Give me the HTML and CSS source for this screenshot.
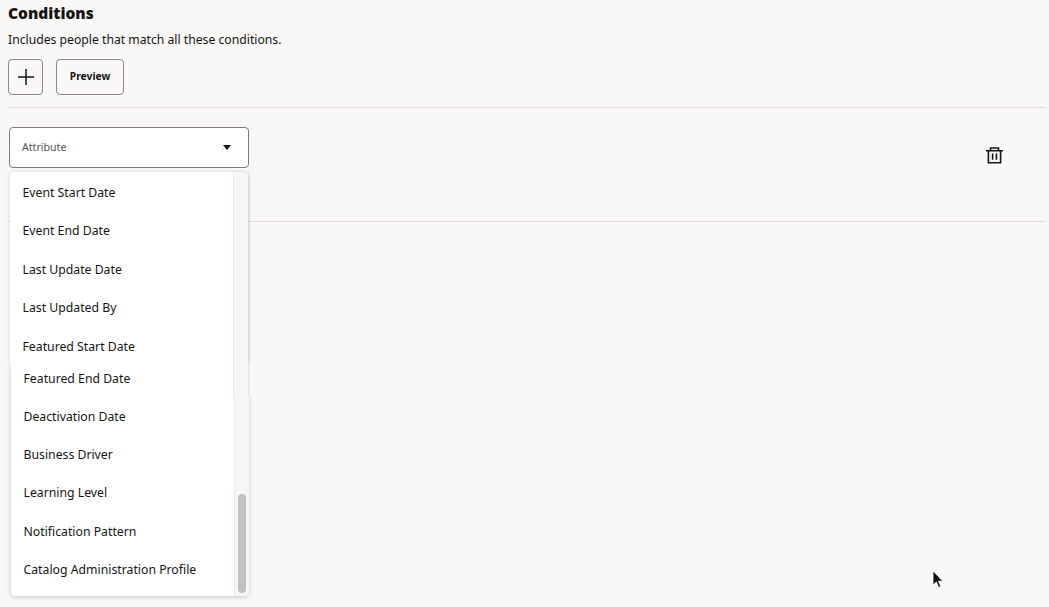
FILE: index.html
```html
<!DOCTYPE html>
<html lang="en">
<head>
<meta charset="utf-8">
<title>Conditions</title>
<link rel="stylesheet" href="styles.css">
</head>
<body>
<main class="page">
  <h1 class="title">Conditions</h1>
  <p class="subtitle">Includes people that match all these conditions.</p>
  <div class="actions">
    <button class="btn btn-icon" aria-label="Add">
      <svg width="18" height="18" viewBox="0 0 18 18"><path d="M9 1v16M1 9h16" stroke="#161513" stroke-width="1.5" fill="none"/></svg>
    </button>
    <button class="btn btn-text"><span class="btn-label">Preview</span></button>
  </div>
  <section class="condition">
    <div class="select">
      <span class="select-label">Attribute</span>
      <svg class="caret" width="8" height="5" viewBox="0 0 8 5"><path d="M0 0h8L4 5z" fill="#161513"/></svg>
    </div>
    <button class="trash" aria-label="Delete">
      <svg width="17" height="17" viewBox="0 0 17 17" fill="none" stroke="#161513" stroke-width="1.6">
        <path d="M0 3.7h17M4.5 3.7V1h8v2.7M2.4 3.7V15.7h12.2V3.7M6.6 6.5v6.2M10.4 6.5v6.2"/>
      </svg>
    </button>
  </section>
</main>

<div class="popup">
  <ul class="slice slice-top">
    <li>Event Start Date</li>
    <li>Event End Date</li>
    <li>Last Update Date</li>
    <li>Last Updated By</li>
    <li>Featured Start Date</li>
  </ul>
  <ul class="slice slice-bottom">
    <li>Featured End Date</li>
    <li>Deactivation Date</li>
    <li>Business Driver</li>
    <li>Learning Level</li>
    <li>Notification Pattern</li>
    <li>Catalog Administration Profile</li>
  </ul>
  <div class="gutter gutter-top"></div>
  <div class="gutter gutter-bottom"><div class="thumb"></div></div>
</div>

<svg class="pointer" width="13" height="19" viewBox="0 0 13 19">
  <path d="M1 0.8v14.2l3.3-3 2.3 5.4 2.2-1-2.3-5.2h4.3z" fill="#111" stroke="#fff" stroke-width="0.8"/>
</svg>
</body>
</html>
```
FILE: styles.css
```css
* { box-sizing: border-box; }
html, body { margin: 0; height: 100%; }
body {
  background: #f9f8f6;
  color: #161513;
  font-family: "Noto Sans", "Open Sans", sans-serif;
  overflow: hidden;
  position: relative;
}
.page { padding: 0 4px 0 8px; }
.title {
  margin: 0;
  padding-top: 3px;
  font-size: 15.5px;
  line-height: 20px;
  font-weight: 900;
}
.subtitle {
  margin: 0;
  padding-top: 8px;
  font-size: 12.2px;
  line-height: 18px;
}
.actions {
  display: flex;
  gap: 13px;
  margin-top: 10px;
  padding-bottom: 12px;
  border-bottom: 1px solid #dfdcd8;
}
.btn {
  height: 36px;
  background: transparent;
  border: 1px solid #8d8a86;
  border-radius: 4px;
  padding: 0;
  display: flex;
  align-items: center;
  justify-content: center;
  font-family: inherit;
  color: #161513;
}
.btn-icon { width: 35px; }
.btn-text { width: 68px; font-size: 10.3px; font-weight: 700; }
.btn-label { padding-bottom: 2px; }
.condition {
  height: 114px;
  padding: 19px 0 0 1px;
  border-bottom: 1px solid #dfdcd8;
  display: flex;
  justify-content: space-between;
  align-items: flex-start;
}
.select {
  width: 240px;
  height: 41px;
  background: #fff;
  border: 1px solid #7f7c78;
  border-radius: 4px;
  padding: 0 17px 0 12px;
  display: flex;
  align-items: center;
  justify-content: space-between;
}
.select-label { font-size: 10.6px; color: #55524e; padding-bottom: 2px; }
.trash {
  background: none;
  border: 0;
  padding: 0;
  margin: 20px 42px 0 0;
  display: flex;
}
.popup {
  position: absolute;
  left: 10px;
  top: 172px;
  width: 239px;
  height: 424px;
}
.slice {
  list-style: none;
  margin: 0;
  padding: 0;
  background: #fff;
  width: 238px;
  font-size: 12.25px;
}
.slice li {
  height: 38.35px;
  line-height: 38.35px;
  padding-left: 12.5px;
  white-space: nowrap;
}
.slice-top {
  height: 192px;
  padding-top: 1.6px;
  box-shadow: 0 0 4px rgba(0, 0, 0, .14);
  border-radius: 4px 4px 0 0;
  clip-path: inset(-8px -8px 0 -8px);
}
.slice-top li {
  height: 38.5px;
  line-height: 38.5px;
}
.slice-bottom {
  height: 232px;
  margin-left: 1px;
  position: relative;
  box-shadow: 0 1px 5px rgba(0, 0, 0, .2);
  border-radius: 0 0 4px 4px;
  clip-path: polygon(-8px 0, 222px 0, 222px 34px, 246px 34px, 246px 240px, -8px 240px);
}
.slice-bottom li:first-child {
  height: 33.8px;
  line-height: 30px;
}
.gutter {
  position: absolute;
  width: 15px;
  background: #f7f6f4;
  border-left: 1px solid #eceae7;
}
.gutter-top {
  left: 223px;
  top: 0;
  height: 226px;
  border-radius: 0 4px 0 0;
  box-shadow: 1px 0 2px rgba(0, 0, 0, .1);
}
.gutter-bottom { left: 224px; top: 226px; height: 198px; border-radius: 0 0 4px 0; }
.thumb {
  position: absolute;
  left: 3px;
  top: 96px;
  width: 8px;
  height: 99px;
  border-radius: 4px;
  background: #c2c1be;
}
.pointer { position: absolute; left: 932px; top: 570px; }
```
